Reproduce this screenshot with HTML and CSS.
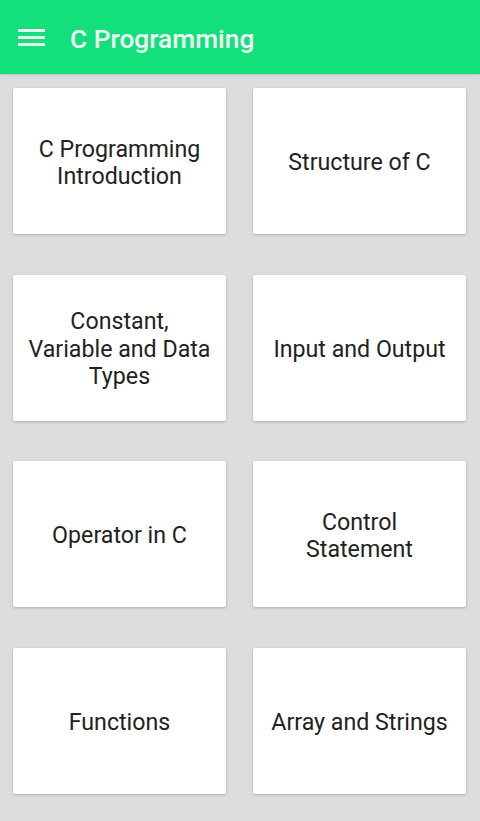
FILE: index.html
```html
<!DOCTYPE html>
<html>
<head>
<meta charset="utf-8">
<link rel="stylesheet" href="styles.css">
</head>
<body>
<header class="appbar">
  <svg class="menu" width="27" height="17" viewBox="0 0 27 17"><rect x="0" y="0" width="27" height="3" fill="#e8fff0"/><rect x="0" y="7" width="27" height="3" fill="#e8fff0"/><rect x="0" y="14" width="27" height="3" fill="#e8fff0"/></svg>
  <h1 class="title">C Programming</h1>
</header>
<main class="grid">
  <div class="card">C Programming<br>Introduction</div>
  <div class="card">Structure of C</div>
  <div class="card">Constant,<br>Variable and Data<br>Types</div>
  <div class="card">Input and Output</div>
  <div class="card">Operator in C</div>
  <div class="card">Control<br>Statement</div>
  <div class="card">Functions</div>
  <div class="card">Array and Strings</div>
</main>
</body>
</html>
```
FILE: styles.css
```css
html, body {
  margin: 0;
  padding: 0;
  background: #dddddd;
  font-family: Roboto, "Liberation Sans", sans-serif;
  height: 821px;
  overflow: hidden;
}
.appbar {
  height: 74px;
  background: #14e07b;
  display: flex;
  align-items: center;
  padding-left: 18px;
  box-sizing: border-box;
  box-shadow: 0 1px 2px rgba(0,0,0,0.15);
}
.menu {
  display: block;
  margin-top: 1px;
}
.title {
  margin: 3px 0 0 25px;
  font-size: 26.3px;
  font-weight: 500;
  color: #effff5;
}
.grid {
  display: grid;
  grid-template-columns: 213px 213px;
  grid-auto-rows: 146px;
  column-gap: 27px;
  row-gap: 40.5px;
  padding: 14px 14px 0 13px;
}
.card {
  background: #ffffff;
  border-radius: 2px;
  box-shadow: 0 1px 3px rgba(0,0,0,0.22);
  display: flex;
  align-items: center;
  justify-content: center;
  text-align: center;
  font-size: 23.2px;
  line-height: 27.5px;
  color: #222222;
  padding: 4px 4px 0;
}
```
